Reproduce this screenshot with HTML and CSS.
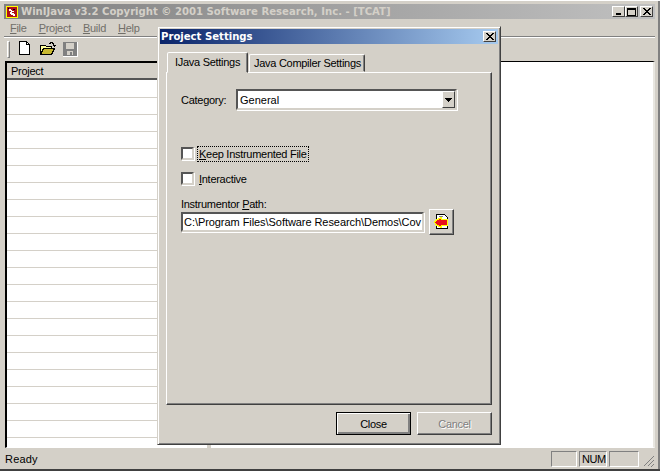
FILE: index.html
```html
<!DOCTYPE html>
<html lang="en">
<head>
<meta charset="utf-8">
<title>WinIJava</title>
<link rel="stylesheet" href="styles.css">
</head>
<body>
<div class="window">
  <div class="titlebar inactive">
    <svg class="appicon" width="12" height="12" viewBox="0 0 12 12" shape-rendering="crispEdges"><rect x=".5" y=".5" width="11" height="11" fill="#b01018" stroke="#ff0"/><path d="M3 3h2v1h1v1h2v1H6v1h2v1h1v2H7V9H5V8H4V6h1V5H3z" fill="#fff"/><path d="M2 2h1v1H2zM7 3h2v1H7z" fill="#000"/></svg>
    <span class="title-text">WinIJava v3.2 Copyright © 2001 Software Research, Inc. - [TCAT]</span>
    <div class="caption-btns">
      <button class="capbtn"><svg width="8" height="7" viewBox="0 0 8 7" shape-rendering="crispEdges"><path d="M1 5h5v2H1z"/></svg></button>
      <button class="capbtn"><svg width="9" height="8" viewBox="0 0 9 8" shape-rendering="crispEdges"><path d="M0 0h9v8H0zM1 2v5h7V2z" fill-rule="evenodd"/></svg></button>
      <button class="capbtn gap"><svg width="8" height="7" viewBox="0 0 8 7" shape-rendering="crispEdges"><path d="M0 0h2v1h1v1h2V1h1V0h2v1H7v1H6v1H5v1h1v1h1v1h1v1H6V6H5V5H3v1H2v1H0V6h1V5h1V4h1V3H2V2H1V1H0z"/></svg></button>
    </div>
  </div>
  <div class="menubar">
    <span class="menu"><u>F</u>ile</span>
    <span class="menu"><u>P</u>roject</span>
    <span class="menu"><u>B</u>uild</span>
    <span class="menu"><u>H</u>elp</span>
  </div>
  <div class="toolbar">
    <span class="grip"></span>
    <svg class="tool" width="16" height="16" viewBox="0 0 16 16" shape-rendering="crispEdges"><path d="M2.500 .5h7l3 3v10h-10z" fill="#fff" stroke="#000"/><path d="M9.500 .5v3h3" fill="none" stroke="#000"/></svg>
    <svg class="tool" width="16" height="16" viewBox="0 0 16 16" shape-rendering="crispEdges"><path d="M.5 4.500h5l1 1h5v2h-8l-3 6z" fill="#ffff9c" stroke="#000"/><path d="M.5 13.500l3-6h11l-3 6z" fill="#c8b830" stroke="#000"/><path d="M9 2h1V1h3v1h1v2h-1V3h-1V2h-1v1H9z" fill="#000"/><path d="M13 4h3l-1.500 2z" fill="#000"/></svg>
    <svg class="tool save" width="16" height="16" viewBox="0 0 16 16" shape-rendering="crispEdges"><rect x="0" y="1" width="15" height="15" fill="#fff"/><rect x="0" y="1" width="14" height="14" fill="#808080"/><rect x="3" y="2" width="8" height="6" fill="#d4d0c8"/><rect x="4" y="10" width="6" height="4" fill="#d4d0c8"/><rect x="7" y="11" width="2" height="3" fill="#808080"/></svg>
  </div>
  <div class="workspace">
    <div class="left-pane">
      <div class="list-head">Project</div>
      <div class="list-body"></div>
    </div>
    <div class="right-pane"></div>
  </div>
  <div class="statusbar">
    <span class="status-text">Ready</span>
    <span class="status-cell cell-a"></span>
    <span class="status-cell cell-b">NUM</span>
    <span class="status-cell cell-c"></span>
    <svg class="sizer" width="13" height="13" viewBox="0 0 13 13" shape-rendering="crispEdges"><path d="M12 2v1h-1v1h-1v1H9v1H8v1H7v1H6v1H5v1H4v1H3v1h1v-1h1v-1h1V9h1V8h1V7h1V6h1V5h1V4h1V3h1V2zM12 6v1h-1v1h-1v1H9v1H8v1H7v1h1v-1h1v-1h1V9h1V8h1V7h1V6zM12 10v1h-1v1h-1v1h1v-1h1v-1h1v-1z" fill="#808080"/></svg>
  </div>

  <div class="dialog">
    <div class="titlebar active">
      <span class="title-text">Project Settings</span>
      <button class="capbtn"><svg width="8" height="7" viewBox="0 0 8 7" shape-rendering="crispEdges"><path d="M0 0h2v1h1v1h2V1h1V0h2v1H7v1H6v1H5v1h1v1h1v1h1v1H6V6H5V5H3v1H2v1H0V6h1V5h1V4h1V3H2V2H1V1H0z"/></svg></button>
    </div>
    <div class="tabs">
      <span class="tab selected">IJava Settings</span>
      <span class="tab">Java Compiler Settings</span>
    </div>
    <div class="tab-pane">
      <div class="category-row">
        <label class="category-label">Cate<u>g</u>ory:</label>
        <div class="select">
          <span class="select-value">General</span>
          <span class="select-arrow"><svg width="7" height="4" viewBox="0 0 7 4" shape-rendering="crispEdges"><path d="M0 0h7v1H6v1H5v1H4v1H3V3H2V2H1V1H0z"/></svg></span>
        </div>
      </div>
      <div class="check-row first">
        <span class="checkbox"></span>
        <span class="check-label focused"><u>K</u>eep Instrumented File</span>
      </div>
      <div class="check-row second">
        <span class="checkbox"></span>
        <span class="check-label"><u>I</u>nteractive</span>
      </div>
      <div class="path-label">Instrumentor <u>P</u>ath:</div>
      <div class="path-row">
        <div class="path-input">C:\Program Files\Software Research\Demos\Cov</div>
        <button class="browse"><svg width="15" height="16" viewBox="0 0 15 16" shape-rendering="crispEdges"><path d="M2.500 .5h8l3 3v11h-11z" fill="#fff" stroke="#000"/><path d="M5 2h4v1H5z" fill="#808080"/><path d="M0 7h1V6h1V5h2V4h2V3h2v2h6v7H8v2H6v-1H4v-1H2v-1H1V9H0z" fill="#ff0"/><path d="M1 8h1V7h1V6h2V5h2v1h6v5H7v1H5v-1H3v-1H2V9H1z" fill="#e8101c"/></svg></button>
      </div>
    </div>
    <div class="dialog-actions">
      <button class="btn default">Close</button>
      <button class="btn disabled">Cancel</button>
    </div>
  </div>
</div>
</body>
</html>
```
FILE: styles.css
```css
* { box-sizing: border-box; }
html, body { margin: 0; padding: 0; }
body {
  width: 660px;
  height: 471px;
  overflow: hidden;
  background: #d4d0c8;
  font-family: "Liberation Sans", Arial, sans-serif;
  font-size: 11px;
  letter-spacing: -0.28px;
  color: #000;
}
u { text-underline-offset: 1px; }
button { font: inherit; letter-spacing: inherit; padding: 0; margin: 0; }
svg { display: block; }

.window {
  position: relative;
  width: 660px;
  height: 471px;
  padding: 4px 3px 0 4px;
  background: #d4d0c8;
  border-top: 1px solid #fff;
  border-bottom: 2px solid #404040;
  display: flex;
  flex-direction: column;
}
.window::after {
  content: "";
  position: absolute;
  top: 0;
  right: 0;
  width: 2px;
  bottom: 0;
  background: #808080;
}

.titlebar {
  display: flex;
  align-items: center;
  flex: none;
  font-family: "DejaVu Sans", Verdana, sans-serif;
  font-weight: 700;
  font-size: 10.100px;
  letter-spacing: 0;
}
.titlebar.inactive {
  height: 15px;
  margin-top: -1px;
  padding: 0 2px;
  width: 651px;
  color: #d4d0c8;
  background: linear-gradient(90deg, #808080, #c0c0c0);
}
.titlebar.active {
  height: 15px;
  color: #fff;
  justify-content: space-between;
  padding: 0 2px 0 1px;
  background: linear-gradient(90deg, #0a246a, #a6caef);
}
.appicon { flex: none; margin-right: 3px; }
.title-text { white-space: nowrap; }
.caption-btns { margin-left: auto; display: flex; }
.capbtn {
  width: 13px;
  height: 11px;
  display: flex;
  align-items: center;
  justify-content: center;
  background: #d4d0c8;
  border: 1px solid;
  border-color: #fff #404040 #404040 #fff;
  flex: none;
}
.capbtn.gap { margin-left: 2px; }

.menubar {
  height: 18px;
  flex: none;
  display: flex;
  align-items: center;
  gap: 12px;
  padding: 0 0 0 6px;
  color: #716f69;
  border-bottom: 1px solid #808080;
  box-shadow: 0 1px 0 #fff;
  width: 651px;
}

.toolbar {
  height: 24px;
  flex: none;
  display: flex;
  align-items: center;
  padding: 0 0 0 3px;
  gap: 7px;
}
.grip {
  width: 3px;
  height: 17px;
  border: 1px solid;
  border-color: #fff #808080 #808080 #fff;
}
.tool { flex: none; }

.workspace {
  flex: 1;
  min-height: 0;
  display: flex;
  gap: 4px;
  padding: 0 0 0 1px;
}
.left-pane {
  width: 202px;
  display: flex;
  flex-direction: column;
  border-top: 2px solid #000;
  border-left: 2px solid #000;
  border-bottom: 1px solid #fff;
  background: #fff;
}
.list-head {
  height: 17px;
  flex: none;
  padding: 2px 0 0 4px;
  background: #d4d0c8;
  border-bottom: 2px solid #555;
}
.list-body {
  flex: 1;
  border-top: 1px solid #fff;
  background: repeating-linear-gradient(#fff 0, #fff 16px, #d4d0c8 16px, #d4d0c8 17px);
}
.right-pane {
  width: 444px;
  background: #fff;
  border-top: 1px solid #000;
  border-bottom: 1px solid #fff;
  border-right: 2px solid #e8e6e0;
}

.statusbar {
  height: 21px;
  flex: none;
  display: flex;
  align-items: center;
  padding-left: 1px;
  width: 652px;
  letter-spacing: 0.2px;
}
.status-text { flex: 1; }
.status-cell {
  height: 16px;
  line-height: 14px;
  letter-spacing: -0.5px;
  border: 1px solid;
  border-color: #808080 #fff #fff #808080;
  padding-left: 2px;
}
.cell-a { width: 26px; margin-right: 2px; }
.cell-b { width: 28px; margin-right: 2px; }
.cell-c { width: 30px; margin-right: 2px; }
.sizer { flex: none; margin-top: 4px; margin-right: 2px; }

.dialog {
  position: absolute;
  left: 157px;
  top: 25px;
  width: 344px;
  height: 419px;
  padding: 2px 2px 0;
  background: #d4d0c8;
  border: 1px solid;
  border-color: #d4d0c8 #404040 #404040 #d4d0c8;
  box-shadow: inset 1px 1px 0 #fff, inset -1px -1px 0 #808080;
  display: flex;
  flex-direction: column;
}
.tabs {
  display: flex;
  align-items: flex-end;
  height: 28px;
  flex: none;
  padding: 0 0 0 7px;
  position: relative;
  z-index: 1;
}
.tab {
  height: 18px;
  width: 116px;
  padding: 2px 0 0 4px;
  white-space: nowrap;
  border: 1px solid;
  border-color: #fff #404040 transparent #fff;
  border-radius: 2px 2px 0 0;
  box-shadow: inset -1px 0 0 #808080;
}
.tab.selected {
  height: 21px;
  width: 81px;
  padding: 3px 0 0 7px;
  margin-right: 1px;
  margin-bottom: -1px;
  background: #d4d0c8;
}
.tab-pane {
  width: 326px;
  height: 333px;
  margin-left: 6px;
  flex: none;
  padding: 16px 0 0 14px;
  border: 1px solid;
  border-color: #fff #404040 #404040 #fff;
  box-shadow: inset -1px -1px 0 #808080;
}
.category-row { display: flex; align-items: center; height: 21px; }
.category-label { width: 55px; flex: none; }
.select {
  width: 221px;
  height: 21px;
  display: flex;
  align-items: center;
  justify-content: space-between;
  background: #fff;
  border: 2px solid;
  border-color: #555 #d4d0c8 #d4d0c8 #555;
  box-shadow: 1px 1px 0 #fff;
  padding-left: 2px;
  letter-spacing: 0;
}
.select-value { flex: 1; }
.select-arrow {
  width: 13px;
  height: 17px;
  display: flex;
  align-items: center;
  justify-content: center;
  background: #d4d0c8;
  border: 1px solid;
  border-color: #fff #404040 #404040 #fff;
}

.check-row { display: flex; align-items: flex-start; height: 14px; }
.check-row.first { margin-top: 37px; }
.check-row.second { margin-top: 11px; }
.checkbox {
  width: 13px;
  height: 13px;
  flex: none;
  background: #fff;
  border: 2px solid;
  border-color: #555 #d4d0c8 #d4d0c8 #555;
  box-shadow: 1px 1px 0 #fff;
  margin-right: 4px;
}
.check-label { padding: 0 1px; line-height: 14px; }
.check-label.focused { outline: 1px dotted #000; outline-offset: 0; }

.path-label { margin-top: 11px; height: 14px; line-height: 14px; }
.path-row { display: flex; align-items: center; gap: 5px; margin-top: -2px; }
.path-input {
  width: 243px;
  height: 20px;
  padding-left: 1px;
  line-height: 16px;
  background: #fff;
  white-space: nowrap;
  overflow: hidden;
  letter-spacing: -0.06px;
  border: 2px solid;
  border-color: #555 #d4d0c8 #d4d0c8 #555;
  box-shadow: 1px 1px 0 #fff;
}
.browse {
  width: 25px;
  height: 26px;
  display: flex;
  align-items: center;
  justify-content: center;
  background: #d4d0c8;
  border: 1px solid;
  border-color: #fff #404040 #404040 #fff;
  box-shadow: inset -1px -1px 0 #808080;
}

.dialog-actions {
  display: flex;
  justify-content: flex-end;
  gap: 6px;
  padding: 7px 6px 0 0;
}
.btn {
  width: 75px;
  height: 23px;
  background: #d4d0c8;
  border: 1px solid;
  border-color: #fff #404040 #404040 #fff;
  box-shadow: inset -1px -1px 0 #808080;
}
.btn.default {
  border: 1px solid #000;
  box-shadow: inset 1px 1px 0 #fff, inset -2px -2px 0 #808080;
}
.btn.disabled { color: #808080; text-shadow: 1px 1px 0 #fff; }
```
